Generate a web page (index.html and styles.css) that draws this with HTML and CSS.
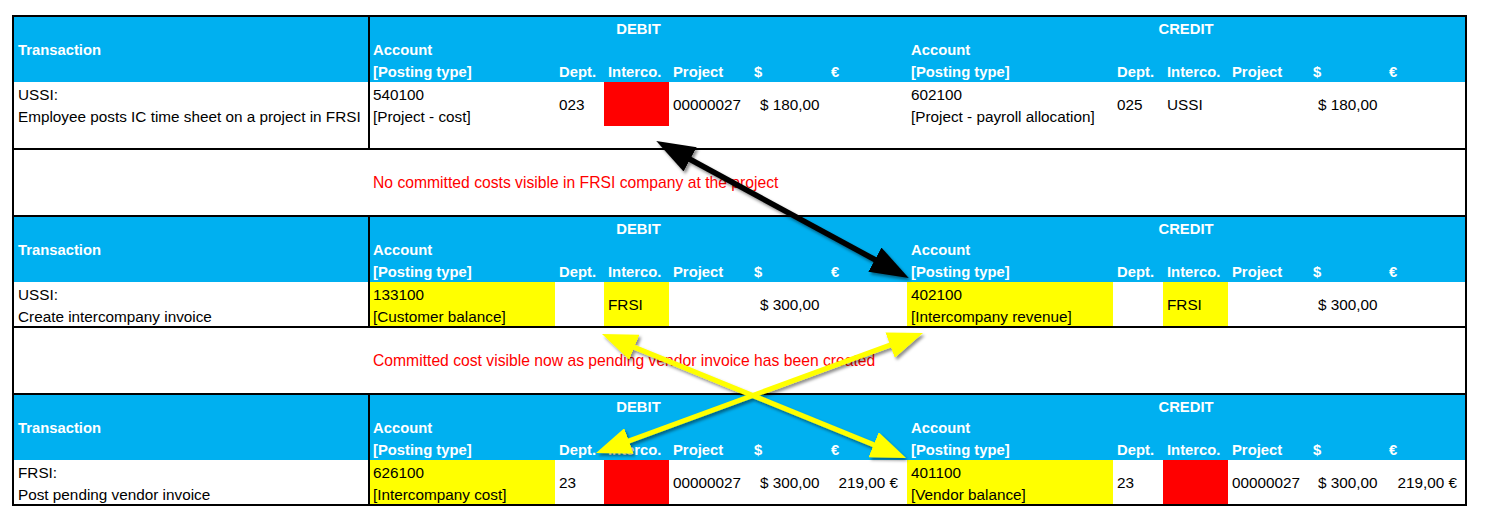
FILE: index.html
```html
<!DOCTYPE html>
<html lang="en">
<head>
<meta charset="utf-8">
<title>Intercompany postings</title>
<link rel="stylesheet" href="styles.css">
</head>
<body>
<div class="sheet">

  <section class="block">
    <div class="row head">
      <div class="h-trans">Transaction</div>
      <div class="h-side h-debit">DEBIT</div>
      <div class="h-side h-credit">CREDIT</div>
      <div class="h-acc h-acc-d">Account<br>[Posting type]</div>
      <div class="h-acc h-acc-c">Account<br>[Posting type]</div>
      <div class="h-lab">Dept.</div>
      <div class="h-lab">Interco.</div>
      <div class="h-lab">Project</div>
      <div class="h-lab">$</div>
      <div class="h-lab">€</div>
      <div class="h-lab">Dept.</div>
      <div class="h-lab">Interco.</div>
      <div class="h-lab">Project</div>
      <div class="h-lab">$</div>
      <div class="h-lab">€</div>
    </div>
    <div class="row data tall">
      <div class="d-trans">USSI:<br>Employee posts IC time sheet on a project in FRSI</div>
      <div class="d acc">540100<br>[Project - cost]</div>
      <div class="d">023</div>
      <div class="d red"></div>
      <div class="d">00000027</div>
      <div class="d money">$ 180,00</div>
      <div class="d eur"></div>
      <div class="d acc acc-c">602100<br>[Project - payroll allocation]</div>
      <div class="d">025</div>
      <div class="d">USSI</div>
      <div class="d"></div>
      <div class="d money money-c">$ 180,00</div>
      <div class="d eur eur-c"></div>
    </div>
  </section>

  <div class="row note">
    <div class="note-text">No committed costs visible in FRSI company at the project</div>
  </div>

  <section class="block">
    <div class="row head">
      <div class="h-trans">Transaction</div>
      <div class="h-side h-debit">DEBIT</div>
      <div class="h-side h-credit">CREDIT</div>
      <div class="h-acc h-acc-d">Account<br>[Posting type]</div>
      <div class="h-acc h-acc-c">Account<br>[Posting type]</div>
      <div class="h-lab">Dept.</div>
      <div class="h-lab">Interco.</div>
      <div class="h-lab">Project</div>
      <div class="h-lab">$</div>
      <div class="h-lab">€</div>
      <div class="h-lab">Dept.</div>
      <div class="h-lab">Interco.</div>
      <div class="h-lab">Project</div>
      <div class="h-lab">$</div>
      <div class="h-lab">€</div>
    </div>
    <div class="row data">
      <div class="d-trans">USSI:<br>Create intercompany invoice</div>
      <div class="d acc yellow">133100<br>[Customer balance]</div>
      <div class="d"></div>
      <div class="d yellow">FRSI</div>
      <div class="d"></div>
      <div class="d money">$ 300,00</div>
      <div class="d eur"></div>
      <div class="d acc acc-c yellow">402100<br>[Intercompany revenue]</div>
      <div class="d"></div>
      <div class="d yellow">FRSI</div>
      <div class="d"></div>
      <div class="d money money-c">$ 300,00</div>
      <div class="d eur eur-c"></div>
    </div>
  </section>

  <div class="row note">
    <div class="note-text">Committed cost visible now as pending vendor invoice has been created</div>
  </div>

  <section class="block">
    <div class="row head">
      <div class="h-trans">Transaction</div>
      <div class="h-side h-debit">DEBIT</div>
      <div class="h-side h-credit">CREDIT</div>
      <div class="h-acc h-acc-d">Account<br>[Posting type]</div>
      <div class="h-acc h-acc-c">Account<br>[Posting type]</div>
      <div class="h-lab">Dept.</div>
      <div class="h-lab">Interco.</div>
      <div class="h-lab">Project</div>
      <div class="h-lab">$</div>
      <div class="h-lab">€</div>
      <div class="h-lab">Dept.</div>
      <div class="h-lab">Interco.</div>
      <div class="h-lab">Project</div>
      <div class="h-lab">$</div>
      <div class="h-lab">€</div>
    </div>
    <div class="row data">
      <div class="d-trans">FRSI:<br>Post pending vendor invoice</div>
      <div class="d acc yellow">626100<br>[Intercompany cost]</div>
      <div class="d">23</div>
      <div class="d red"></div>
      <div class="d">00000027</div>
      <div class="d money">$ 300,00</div>
      <div class="d eur">219,00 €</div>
      <div class="d acc acc-c yellow">401100<br>[Vendor balance]</div>
      <div class="d">23</div>
      <div class="d red"></div>
      <div class="d">00000027</div>
      <div class="d money money-c">$ 300,00</div>
      <div class="d eur eur-c">219,00 €</div>
    </div>
  </section>

</div>

<svg class="arrows" width="1485" height="523" viewBox="0 0 1485 523" aria-hidden="true">
  <defs>
    <marker id="head-black" viewBox="0 0 7 5" refX="3" refY="2.5" markerWidth="7" markerHeight="5" orient="auto-start-reverse" markerUnits="strokeWidth">
      <path d="M0,0 L7,2.5 L0,5 z" fill="#000"/>
    </marker>
    <marker id="head-yellow" viewBox="0 0 7 5.4" refX="3" refY="2.7" markerWidth="7" markerHeight="5.4" orient="auto-start-reverse" markerUnits="strokeWidth">
      <path d="M0,0 L7,2.7 L0,5.4 z" fill="#ffff00"/>
    </marker>
    <filter id="shadow" x="-10%" y="-20%" width="130%" height="150%">
      <feDropShadow dx="2" dy="2.5" stdDeviation="1.5" flood-color="#000" flood-opacity="0.45"/>
    </filter>
  </defs>
  <g filter="url(#shadow)">
    <line x1="675.6" y1="151.5" x2="889.4" y2="267.5" stroke="#000" stroke-width="5.5" marker-start="url(#head-black)" marker-end="url(#head-black)"/>
    <line x1="620.5" y1="341.6" x2="887.5" y2="450.4" stroke="#ffff00" stroke-width="5" marker-start="url(#head-yellow)" marker-end="url(#head-yellow)"/>
    <line x1="614.8" y1="446.1" x2="904.2" y2="339.9" stroke="#ffff00" stroke-width="5" marker-start="url(#head-yellow)" marker-end="url(#head-yellow)"/>
  </g>
</svg>
</body>
</html>
```

FILE: styles.css
```css
* {
  box-sizing: border-box;
}

body {
  margin: 15px 0 0 12px;
  background: #ffffff;
  color: #000000;
  font-family: "Liberation Sans", Arial, sans-serif;
  font-size: 15.3px;
}

.sheet {
  width: 1455px;
  border: 2px solid #000000;
}

.row {
  display: grid;
  grid-template-columns: 356px 185px 49px 65px 81px 77px 80px 206px 50px 65px 81px 76px 80px;
}

/* header band */
.head {
  grid-template-rows: 22px 22px 21px;
  background: #00b0f0;
  color: #ffffff;
  font-weight: bold;
  font-size: 14.8px;
  line-height: 22px;
  white-space: nowrap;
}

.h-trans {
  grid-column: 1;
  grid-row: 1 / 4;
  display: flex;
  align-items: center;
  padding-left: 4px;
  border-right: 2px solid #000000;
}

.h-side {
  grid-row: 1;
  text-align: center;
  padding-top: 1px;
}

.h-debit {
  grid-column: 2 / 8;
}

.h-credit {
  grid-column: 8 / 14;
}

.h-acc {
  grid-row: 2 / 4;
  padding-left: 3px;
  padding-top: 1px;
  line-height: 21.5px;
}

.h-acc-d {
  grid-column: 2;
}

.h-acc-c {
  grid-column: 8;
  padding-left: 4px;
}

.h-lab {
  grid-row: 3;
  padding-left: 4px;
}

/* data band */
.data {
  grid-template-rows: 22px 22px;
  line-height: 22px;
  white-space: nowrap;
}

.data.tall {
  grid-template-rows: 22px 22px 22px;
}

.d-trans {
  grid-column: 1;
  grid-row: 1 / -1;
  padding-left: 4px;
  padding-top: 2px;
  border-right: 2px solid #000000;
}

.d {
  grid-row: 1 / 3;
  display: flex;
  align-items: center;
  padding-left: 4px;
  padding-top: 1px;
}

.d.acc {
  display: block;
  padding-left: 3px;
  padding-top: 2px;
  line-height: 21.5px;
}

.d.acc-c {
  padding-left: 4px;
}

.d.money {
  padding-left: 10px;
}

.d.money-c {
  padding-left: 9px;
}

.d.eur {
  justify-content: flex-end;
  padding-right: 9px;
}

.d.eur-c {
  padding-right: 8px;
}

.yellow {
  background: #ffff00;
}

.red {
  background: #ff0000;
}

/* note rows between blocks */
.note {
  grid-template-rows: 65px;
  border-top: 2px solid #000000;
  border-bottom: 2px solid #000000;
}

.note-text {
  grid-column: 2 / -1;
  align-self: center;
  padding-left: 3px;
  padding-top: 1px;
  color: #ff0000;
  font-size: 15.7px;
  white-space: nowrap;
}

/* arrows drawn over the sheet */
.arrows {
  position: absolute;
  left: 0;
  top: 0;
  pointer-events: none;
}
```
